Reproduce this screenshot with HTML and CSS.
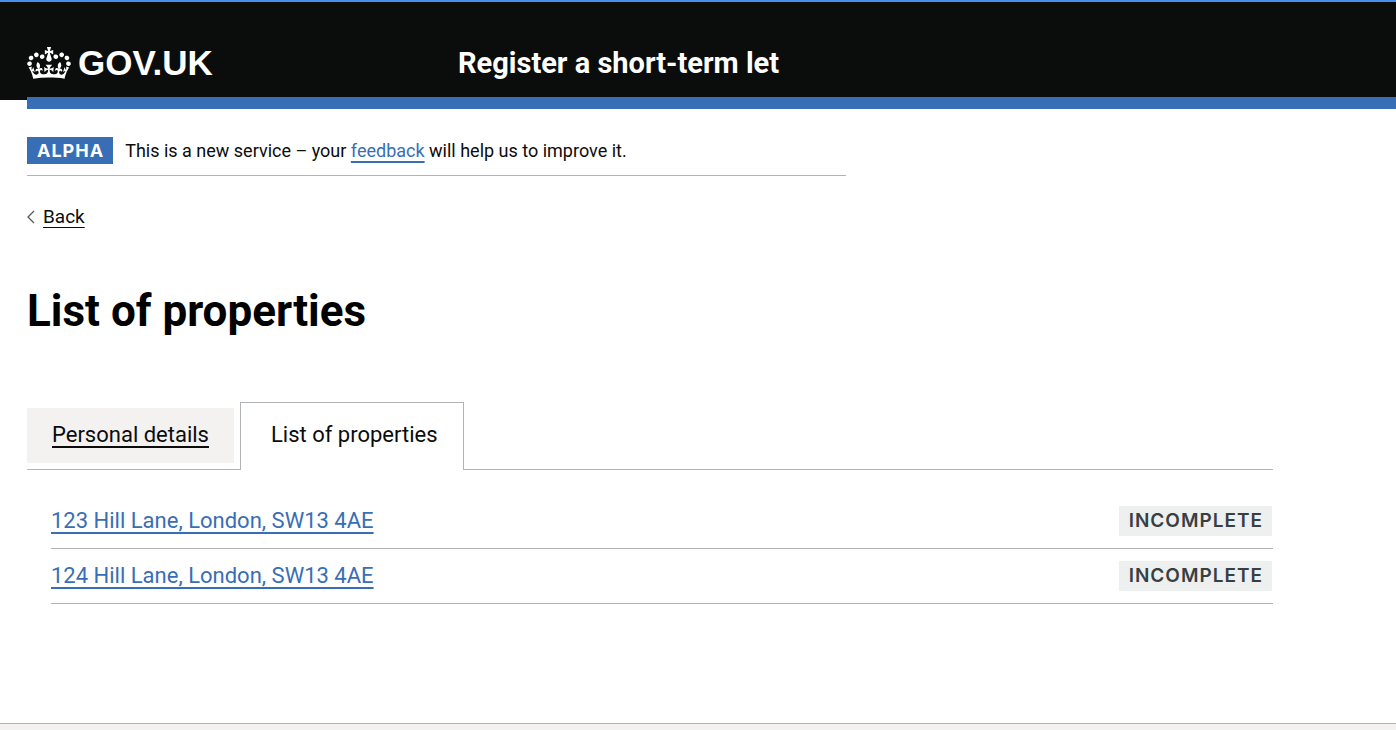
FILE: index.html
```html
<!DOCTYPE html>
<html lang="en">
<head>
<meta charset="utf-8">
<meta name="viewport" content="width=device-width, initial-scale=1">
<title>List of properties - Register a short-term let</title>
<link rel="stylesheet" href="styles.css">
</head>
<body>
<header class="header">
  <div class="header-inner">
    <a class="logo" href="#">
      <svg class="crown" viewBox="0 0 132 97" aria-hidden="true"><path fill="currentColor" fill-rule="evenodd" d="M25 30.2c3.5 1.5 7.7-.2 9.1-3.7 1.5-3.6-.2-7.8-3.9-9.2-3.6-1.4-7.6.3-9.1 3.9-1.4 3.5.3 7.5 3.9 9zM9 39.5c3.6 1.5 7.8-.2 9.2-3.7 1.5-3.6-.2-7.8-3.9-9.1-3.6-1.5-7.6.2-9.1 3.8-1.4 3.5.3 7.5 3.8 9zM4.4 57.2c3.5 1.5 7.7-.2 9.1-3.8 1.5-3.6-.2-7.7-3.9-9.1-3.5-1.5-7.6.3-9.1 3.8-1.4 3.5.3 7.6 3.9 9.1zm38.3-21.4c3.5 1.5 7.7-.2 9.1-3.8 1.5-3.6-.2-7.7-3.9-9.1-3.6-1.5-7.6.3-9.1 3.8-1.3 3.6.4 7.7 3.9 9.1zm64.4-5.6c-3.6 1.5-7.8-.2-9.1-3.7-1.5-3.6.2-7.8 3.8-9.2 3.6-1.4 7.7.3 9.2 3.9 1.3 3.5-.4 7.5-3.9 9zm15.9 9.3c-3.6 1.5-7.7-.2-9.1-3.7-1.5-3.6.2-7.8 3.7-9.1 3.6-1.5 7.7.2 9.2 3.8 1.5 3.5-.3 7.5-3.8 9zm4.7 17.7c-3.6 1.5-7.8-.2-9.2-3.8-1.5-3.6.2-7.7 3.9-9.1 3.6-1.5 7.7.3 9.2 3.8 1.3 3.5-.4 7.6-3.9 9.1zM89.3 35.8c-3.6 1.5-7.8-.2-9.2-3.8-1.4-3.6.2-7.7 3.9-9.1 3.6-1.5 7.7.3 9.2 3.8 1.4 3.6-.3 7.7-3.9 9.1zM69.7 17.7l8.9 4.7V9.3l-8.9 2.8c-.2-.3-.5-.6-.9-.9L72.4 0H59.6l3.5 11.2c-.3.3-.6.5-.9.9l-8.8-2.8v13.1l8.8-4.7c.3.3.6.7.9.9l-5 15.4v.1c-.2.8-.4 1.6-.4 2.4 0 4.1 3.1 7.5 7 8.1h.2c.3 0 .7.1 1 .1.4 0 .7 0 1-.1h.2c4-.6 7.1-4.1 7.1-8.1 0-.8-.1-1.7-.4-2.4V34l-5.1-15.4c.4-.2.7-.6 1-.9zM66 92.8c16.9 0 32.8 1.1 47.1 3.2 4-16.9 8.9-26.7 14-33.5l-9.6-3.4c1 4.9 1.1 7.2 0 10.2-1.5-1.4-3-4.3-4.2-8.7L108.6 76c2.8-2 5-3.2 7.5-3.3-4.4 9.4-10 11.9-13.6 11.2-4.3-.8-6.3-4.6-5.6-7.9 1-4.7 5.7-5.9 8-.5 4.3-8.7-3-11.4-7.6-8.8 7.1-7.2 7.9-13.5 2.1-21.1-8 6.1-8.1 12.3-4.5 20.8-4.7-5.4-12.1-2.5-9.5 6.2 3.4-5.2 7.9-2 7.2 3.1-.6 4.3-6.4 7.8-13.5 7.2-10.3-.9-10.9-8-11.2-13.8 2.5-.5 7.1 1.8 11 7.3L80.2 60c-4.1 4.4-8 5.3-12.3 5.4 1.4-4.4 8-11.6 8-11.6H55.5s6.4 7.2 7.9 11.6c-4.2-.1-8-1-12.3-5.4l1.4 16.4c3.9-5.5 8.5-7.7 10.9-7.3-.3 5.8-.9 12.8-11.1 13.8-7.2.6-12.9-2.9-13.5-7.2-.7-5 3.8-8.3 7.1-3.1 2.7-8.7-4.6-11.6-9.4-6.2 3.7-8.5 3.6-14.7-4.6-20.8-5.8 7.6-5 13.9 2.2 21.1-4.7-2.6-11.9.1-7.7 8.8 2.3-5.5 7.1-4.2 8.1.5.7 3.3-1.3 7.1-5.7 7.9-3.5.7-9-1.8-13.5-11.2 2.5.1 4.7 1.3 7.5 3.3l-4.7-15.4c-1.2 4.4-2.7 7.2-4.3 8.7-1.1-3-.9-5.3 0-10.2l-9.5 3.4c5 6.9 9.9 16.7 14 33.5 14.8-2.1 30.8-3.2 47.7-3.2z"/></svg>
      <span>GOV.UK</span>
    </a>
    <a class="service-name" href="#">Register a short-term let</a>
  </div>
</header>
<div class="header-bar"></div>
<div class="container">
  <div class="phase-banner">
    <strong class="phase-tag">ALPHA</strong>
    <span>This is a new service – your <a class="link" href="#">feedback</a> will help us to improve it.</span>
  </div>
  <a class="back" href="#">
    <svg class="chevron" viewBox="0 0 8 14" aria-hidden="true"><path d="M7 1 1 7l6 6" fill="none" stroke="currentColor" stroke-width="1.3"/></svg>
    <span class="back-text">Back</span>
  </a>
  <main>
    <h1 class="title">List of properties</h1>
    <nav class="tabs" aria-label="Account sections">
      <a class="tab" href="#">Personal details</a>
      <a class="tab tab-selected" href="#properties" aria-current="page">List of properties</a>
    </nav>
    <ul class="properties" id="properties">
      <li class="property"><a class="link" href="#">123 Hill Lane, London, SW13 4AE</a><strong class="status">INCOMPLETE</strong></li>
      <li class="property"><a class="link" href="#">124 Hill Lane, London, SW13 4AE</a><strong class="status">INCOMPLETE</strong></li>
    </ul>
  </main>
</div>
<footer class="footer"></footer>
</body>
</html>
```
FILE: styles.css
```css
* { box-sizing: border-box; }

body {
  display: flex;
  flex-direction: column;
  min-height: 100vh;
  margin: 0;
  background: #fff;
  color: #0b0c0c;
  font-family: Roboto, "Noto Sans", sans-serif;
  font-size: 19px;
  line-height: 24px;
}

.header {
  padding: 45px 27px 21px;
  border-top: 2px solid #4490ee;
  background: #0b0c0c;
  color: #fff;
}

.header-inner {
  display: grid;
  grid-template-columns: 431px 1fr;
  align-items: center;
  max-width: 1246px;
}

.logo,
.service-name {
  color: inherit;
  font-weight: 700;
  line-height: 32px;
  text-decoration: none;
}

.logo {
  display: flex;
  align-items: center;
  gap: 7px;
  font-family: "Liberation Sans", Arial, sans-serif;
  font-size: 35px;
}

.crown { width: 44px; height: 32px; }

.service-name { font-size: 29px; }

.header-bar {
  height: 12px;
  margin: -3px 0 0 27px;
  background: #386eb5;
}

.container {
  flex: 1;
  width: 100%;
  max-width: 1300px;
  padding: 0 27px 119px;
}

.phase-banner {
  display: flex;
  align-items: center;
  gap: 12px;
  max-width: 819px;
  padding: 28px 0 11px;
  border-bottom: 1px solid #b1b4b6;
  font-size: 18px;
}

.phase-tag {
  padding: 2px 9px 1px 10px;
  background: #386eb5;
  color: #fff;
  font-family: Inter, sans-serif;
  letter-spacing: 1px;
}

.link {
  color: #386eb5;
  text-decoration-thickness: 2px;
  text-underline-offset: 4px;
  text-decoration-skip-ink: none;
}

.back {
  display: inline-flex;
  align-items: center;
  gap: 8px;
  margin-top: 29px;
  color: #0b0c0c;
  text-decoration: none;
}

.chevron { width: 8px; height: 14px; color: #505a5f; }

.back-text {
  text-decoration: underline;
  text-decoration-thickness: 1px;
  text-underline-offset: 4px;
}

.title {
  margin: 57px 0 67px;
  color: #000;
  font-size: 44px;
  line-height: 48px;
}

.tabs {
  display: flex;
  align-items: flex-end;
  gap: 6px;
  border-bottom: 1px solid #b1b4b6;
  font-size: 22px;
  line-height: 30px;
}

.tab {
  margin-bottom: 6px;
  padding: 12px 25px 13px;
  background: #f3f2f1;
  color: #0b0c0c;
  text-decoration-thickness: 2px;
  text-underline-offset: 4px;
  text-decoration-skip-ink: none;
}

.tab-selected {
  margin-bottom: -1px;
  padding: 17px 25px 20px 30px;
  border: 1px solid #b1b4b6;
  border-bottom: 0;
  background: #fff;
  text-decoration: none;
}

.properties {
  margin: 0;
  padding: 24px 0 0 24px;
  list-style: none;
  font-size: 22px;
  line-height: 30px;
}

.property {
  display: flex;
  align-items: center;
  justify-content: space-between;
  gap: 24px;
  padding: 12px 1px 12px 0;
  border-bottom: 1px solid #b1b4b6;
}

.status {
  padding: 0 9px 0 10px;
  background: #eeefef;
  color: #383f43;
  font-family: Inter, sans-serif;
  font-size: 19px;
  font-weight: 600;
  letter-spacing: 1px;
}

.footer {
  height: 7px;
  border-top: 1px solid #b1b4b6;
  background: #f3f2f1;
}
```
